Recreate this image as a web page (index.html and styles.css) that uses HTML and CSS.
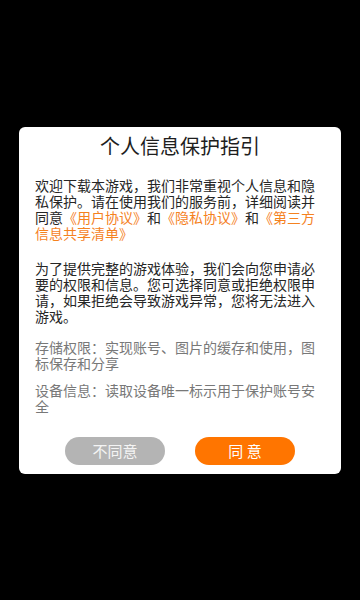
FILE: index.html
```html
<!DOCTYPE html>
<html>
<head>
    <meta charset="utf-8" />
    <title>个人信息保护指引</title>
    <meta name="viewport" content="width=device-width, initial-scale=1">
    <link rel="stylesheet" href="styles.css">
</head>
<body>
    <div class="dialog">
        <h1 class="title">个人信息保护指引</h1>
        <p class="intro">欢迎下载本游戏，我们非常重视个人信息和隐私保护。请在使用我们的服务前，详细阅读并同意<span class="link">《用户协议》</span>和<span class="link">《隐私协议》</span>和<span class="link">《第三方</span><span class="link">信息共享清单》</span></p>
        <p class="intro second">为了提供完整的游戏体验，我们会向您申请必要的权限和信息。您可选择同意或拒绝权限申请，如果拒绝会导致游戏异常，您将无法进入游戏。</p>
        <p class="perm">存储权限：实现账号、图片的缓存和使用，图标保存和分享</p>
        <p class="perm last">设备信息：读取设备唯一标示用于保护账号安全</p>
        <div class="buttons">
            <button class="btn disagree" type="button">不同意</button>
            <button class="btn agree" type="button">同 意</button>
        </div>
    </div>
</body>
</html>
```

FILE: styles.css
```css
* {
    padding: 0;
    margin: 0;
    box-sizing: border-box;
}

body {
    background-color: #000;
    height: 600px;
    display: flex;
    justify-content: center;
    align-items: center;
    font-family: "Noto Sans CJK SC", "Noto Sans", sans-serif;
}

.dialog {
    background-color: #fff;
    width: 322px;
    height: 347px;
    border-radius: 6px;
    padding: 5px 16px 0 16px;
}

.title {
    font-size: 20px;
    font-weight: normal;
    line-height: 28px;
    text-align: center;
    color: #1e1e1e;
}

.dialog p {
    font-family: "Liberation Sans", "Noto Sans CJK SC", sans-serif;
    font-size: 14px;
    line-height: 16px;
}

.intro {
    color: #262626;
    margin-top: 18px;
}

.intro.second {
    margin-top: 19px;
}

/* inline-block so each link box stays inside its own 16px line */
.link {
    display: inline-block;
    height: 16px;
    color: #f5821f;
}

.perm {
    color: #787878;
    margin-top: 15px;
}

.perm.last {
    margin-top: 11px;
}

.buttons {
    display: flex;
    justify-content: center;
    gap: 30px;
    margin-top: 22px;
}

.btn {
    width: 100px;
    height: 28px;
    border: 0 solid transparent;
    border-radius: 14px;
    font-family: "Noto Sans CJK SC", sans-serif;
    font-size: 15px;
    color: #fff;
}

.disagree {
    background-color: #b4b4b4;
    color: #f4f4f4;
}

.agree {
    background-color: #ff7500;
}
```
